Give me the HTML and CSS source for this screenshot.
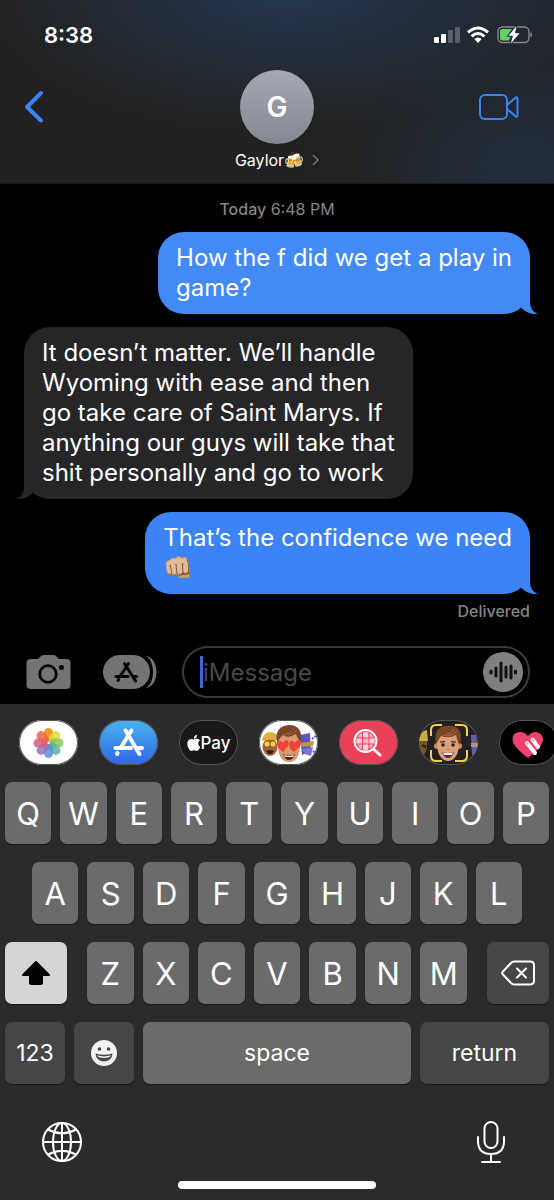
FILE: index.html
```html
<!DOCTYPE html>
<html lang="en">
<head>
    <meta charset="UTF-8">
    <meta name="viewport" content="width=device-width, initial-scale=1">
    <title>Messages</title>
    <link rel="stylesheet" href="styles.css">
</head>
<body>
    <header>
        <div class="status-bar">
            <span class="time">8:38</span>
            <svg class="status-icons" width="98" height="18" viewBox="0 0 98 18" aria-hidden="true">
                <g fill="#fff">
                    <rect x="0" y="11" width="5" height="6" rx="1"/>
                    <rect x="7" y="8" width="5" height="9" rx="1"/>
                    <rect x="14" y="4" width="5" height="13" rx="1" opacity=".25"/>
                    <rect x="21" y="1" width="5" height="16" rx="1" opacity=".25"/>
                </g>
                <g fill="none" stroke="#fff" stroke-width="3">
                    <path d="M34 6.300Q44 -2.300 54 6.300"/>
                    <path d="M37.600 10.400Q44 4.600 50.400 10.400"/>
                </g>
                <path d="M40.300 13Q44 10 47.700 13L44 17Z" fill="#fff"/>
                <rect x="64" y="1" width="31" height="15.500" rx="4.500" fill="none" stroke="#fff" stroke-opacity=".45" stroke-width="1.400"/>
                <path d="M96.500 6Q98 6.500 98 8.800Q98 11 96.500 11.500Z" fill="#fff" opacity=".5"/>
                <path d="M68.500 3H78L73.500 9.500H77L75 14.500H68.500Q66 14.500 66 12V5.500Q66 3 68.500 3Z" fill="#62d266"/>
                <path d="M82.500 0L74.500 9.800H79L76.800 17.500L85.500 7.300H81Z" fill="#fff" stroke="#222c39" stroke-width="2"/>
                <path d="M82.500 0L74.500 9.800H79L76.800 17.500L85.500 7.300H81Z" fill="#fff"/>
            </svg>
        </div>
        <div class="contact-bar">
            <button class="back-btn" aria-label="Back">
                <svg width="20" height="34" viewBox="0 0 20 34"><path d="M17 3L3 17L17 30.500" fill="none" stroke="#3c83f6" stroke-width="4" stroke-linecap="round" stroke-linejoin="round"/></svg>
            </button>
            <div class="avatar">G</div>
            <button class="video-btn" aria-label="Video call">
                <svg width="40" height="28" viewBox="0 0 40 28" fill="none" stroke="#3c83f6" stroke-width="2" stroke-linejoin="round"><rect x="1" y="2" width="27" height="24" rx="5"/><path d="M28 12L36.500 4.700Q38.500 3.500 38.500 6V22Q38.500 24.500 36.500 23.300L28 16"/></svg>
            </button>
        </div>
        <a class="contact-name" href="#">
            <span>Gaylor🍻</span>
            <svg width="7" height="12" viewBox="0 0 7 12"><path d="M1 1L6 6L1 11" fill="none" stroke="#77797e" stroke-width="1.400"/></svg>
        </a>
    </header>

    <main class="messages">
        <p class="timestamp"><b>Today</b> 6:48 PM</p>
        <div class="bubble sent first">
            How the f did we get a play in<br>game?
            <svg class="tail" width="34" height="26" viewBox="0 0 34 26"><path d="M26 0V14Q26 23 34 26Q24 27 17 19.500L8 8Z"/></svg>
        </div>
        <div class="bubble received">
            It doesn’t matter. We’ll handle<br>Wyoming with ease and then<br>go take care of Saint Marys. If<br>anything our guys will take that<br>shit personally and go to work
            <svg class="tail" width="34" height="26" viewBox="0 0 34 26"><path d="M8 0V14Q8 23 0 26Q10 27 17 19.500L26 8Z"/></svg>
        </div>
        <div class="bubble sent">
            That’s the confidence we need<br>👊🏼
            <svg class="tail" width="34" height="26" viewBox="0 0 34 26"><path d="M26 0V14Q26 23 34 26Q24 27 17 19.500L8 8Z"/></svg>
        </div>
        <p class="delivered">Delivered</p>
    </main>

    <form class="compose">
        <button type="button" class="camera-btn" aria-label="Camera">
            <svg width="45" height="36" viewBox="0 0 45 36"><path d="M5 5H11Q13 5 14 3L15 2Q16 1 18 1H27Q29 1 30 2L31 3Q32 5 34 5H40Q44.500 5 44.500 9V31Q44.500 35 40 35H5Q.5 35 .5 31V9Q.5 5 5 5Z" fill="#747476"/><circle cx="22" cy="20" r="8.300" fill="none" stroke="#000" stroke-width="2.800"/><circle cx="35.500" cy="13.500" r="2.500"/></svg>
        </button>
        <button type="button" class="apps-btn" aria-label="Apps">
            <svg width="54" height="36" viewBox="0 0 54 36"><rect x="0" y="1" width="47" height="34" rx="17" fill="#747476"/><path d="M43 1.500Q53.500 5 53.500 18Q53.500 31 43 34.500Q50 29 50 18Q50 7 43 1.500Z" fill="#747476"/><g fill="none" stroke="#000" stroke-width="3" stroke-linecap="round"><path d="M21.500 9.500L32.500 27M25.500 9.500L17 22.500M15.500 25.500L15 26.500M13 22.500H25M30.500 22.500H33.500"/></g></svg>
        </button>
        <label class="message-box">
            <span class="caret"></span>
            <input type="text" placeholder="iMessage" aria-label="iMessage">
            <button type="button" class="audio-btn" aria-label="Record audio">
                <svg width="28" height="24" viewBox="0 0 28 24" stroke="#111" stroke-width="3" stroke-linecap="round"><path d="M2 11V13M7 8V16M12 3V21M17 7V17M22 6V18M26.500 11V13"/></svg>
            </button>
        </label>
    </form>

    <section class="keyboard">
        <div class="app-strip">
            <button class="app photos" aria-label="Photos">
                <svg width="59" height="44" viewBox="0 0 59 44"><g transform="translate(29.500 22)">
                    <rect x="-4.500" y="-15" width="9" height="14" rx="4.500" fill="#f59b2b"/>
                    <rect x="-4.500" y="-15" width="9" height="14" rx="4.500" fill="#dfdc35" transform="rotate(45)" opacity=".85"/>
                    <rect x="-4.500" y="-15" width="9" height="14" rx="4.500" fill="#8fc65a" transform="rotate(90)" opacity=".85"/>
                    <rect x="-4.500" y="-15" width="9" height="14" rx="4.500" fill="#56b597" transform="rotate(135)" opacity=".85"/>
                    <rect x="-4.500" y="-15" width="9" height="14" rx="4.500" fill="#5b93d3" transform="rotate(180)" opacity=".85"/>
                    <rect x="-4.500" y="-15" width="9" height="14" rx="4.500" fill="#9174bb" transform="rotate(225)" opacity=".85"/>
                    <rect x="-4.500" y="-15" width="9" height="14" rx="4.500" fill="#d35c8a" transform="rotate(270)" opacity=".85"/>
                    <rect x="-4.500" y="-15" width="9" height="14" rx="4.500" fill="#ec6248" transform="rotate(315)" opacity=".85"/>
                </g></svg>
            </button>
            <button class="app store" aria-label="App Store">
                <svg width="59" height="44" viewBox="0 0 59 44"><path d="M26.500 9.500L40.500 33M32.500 9.500L21.500 27M18.500 32L18 33M16.500 27H32M39 27H43" fill="none" stroke="#fff" stroke-width="4" stroke-linecap="round"/></svg>
            </button>
            <button class="app pay">
                <svg width="13" height="16" viewBox="2 0 19 24"><path fill="#fff" d="M12.152 6.896c-.948 0-2.415-1.078-3.960-1.040-2.040.027-3.910 1.183-4.961 3.014-2.117 3.675-.546 9.103 1.519 12.090 1.013 1.454 2.208 3.090 3.792 3.039 1.520-.065 2.090-.987 3.935-.987 1.831 0 2.350.987 3.960.948 1.637-.026 2.676-1.480 3.676-2.948 1.156-1.688 1.636-3.325 1.662-3.415-.039-.013-3.182-1.221-3.220-4.857-.026-3.040 2.480-4.494 2.597-4.559-1.429-2.090-3.623-2.324-4.390-2.376-2-.156-3.675 1.090-4.610 1.090zM15.530 3.830c.843-1.012 1.400-2.427 1.245-3.830-1.207.052-2.662.805-3.532 1.818-.780.896-1.454 2.338-1.273 3.714 1.338.104 2.715-.688 3.559-1.701"/></svg>
                Pay
            </button>
            <button class="app memoji" aria-label="Memoji stickers">
                <svg width="59" height="44" viewBox="0 0 59 44">
                    <!-- hard hat face -->
                    <ellipse cx="11" cy="26" rx="7.500" ry="9" fill="#9a6236"/>
                    <path d="M3 20Q4 11 12 11Q19 12 20 19Q11 18 3 20Z" fill="#dfae36"/>
                    <circle cx="8" cy="23" r="2.500" fill="#f5d34a"/><circle cx="14" cy="23" r="2.500" fill="#f5d34a"/>
                    <path d="M7 30Q11 28 15 30L13 33H9Z" fill="#3c1e17"/>
                    <!-- wizard -->
                    <path d="M41 14L51 12L52 30L43 34Z" fill="#5b55b8"/>
                    <path d="M42 22L55 20L54 25L42 26Z" fill="#c7923c"/>
                    <path d="M43 28L54 26L52 35L46 33Z" fill="#7c73d8"/>
                    <path d="M53 18L57 15M54 30L57 33" stroke="#5b55c8" stroke-width="2" stroke-dasharray="2 1"/>
                    <!-- heart eyes -->
                    <path d="M19 20Q18 41 30 41Q42 41 41 20Q39 9 30 10Q21 10 19 20Z" fill="#d99a72"/>
                    <path d="M18 22Q15 5 30 4Q44 4 42 21Q39 19 37 13Q29 18 24 14Q21 16 18 22Z" fill="#7b4528"/>
                    <path d="M24 14Q31 13 35 7M29 14Q36 12 38 9" fill="none" stroke="#a5653f" stroke-width="1"/>
                    <path d="M24 31Q18 27 18 23Q18 19 21.500 20Q23 20 24 22Q25 19 28 19Q31 21 29 25Z" fill="#f24139"/>
                    <path d="M35 31Q30 28 30 23Q31 19 34 20L35.500 22Q38 18 41 20Q44 23 39 27Z" fill="#f24139"/>
                    <path d="M24 33Q30 36 36 33Q34 39 30 39Q26 39 24 33Z" fill="#54231e"/>
                    <path d="M25 34Q30 36 35 34L34 36H26Z" fill="#fff"/>
                </svg>
            </button>
            <button class="app images" aria-label="Images">
                <svg width="59" height="44" viewBox="0 0 59 44"><circle cx="26.500" cy="20" r="9" fill="#fbb6c2"/><path d="M23 11H29V17H23ZM17 17H23V23H17ZM29 17H36V23H29ZM23 23H29V30H23Z" fill="#fff" opacity=".4"/><path d="M23.500 11V29M30 11V29M17 17H36M17 23H36" stroke="#ea4058" stroke-width="1"/><circle cx="26.500" cy="20" r="11" fill="none" stroke="#fff" stroke-width="2"/><path d="M34.500 28L41 34" stroke="#fff" stroke-width="3" stroke-linecap="round"/></svg>
            </button>
            <button class="app animoji" aria-label="Animoji">
                <svg width="59" height="44" viewBox="0 0 59 44">
                    <path d="M0 13Q7 11 8 20Q9 32 3 35L0 32Z" fill="#74542c"/><path d="M0 20Q1 10 8 9L9 20Z" fill="#c9ad3d"/><path d="M3 24L7 26" stroke="#222" stroke-width="2"/>
                    <path d="M52 14H57L59 33L53 34Z" fill="#6561a8"/><path d="M52 22H59V26H52Z" fill="#b6946b"/>
                    <circle cx="18" cy="25" r="3" fill="#c98b62"/><circle cx="40" cy="25" r="3" fill="#c98b62"/>
                    <path d="M18 17Q17 39 29 40Q41 39 40 17Q37 10 29 11Q21 10 18 17Z" fill="#dda078"/>
                    <path d="M17 23Q14 6 27 5Q42 3 42 16Q42 21 40 24Q38 19 37 14Q30 18 22 15Q20 18 17 23Z" fill="#7b4528"/>
                    <path d="M23 15Q31 14 35 8M28 15Q35 14 38 10" fill="none" stroke="#ad6a42" stroke-width="1"/>
                    <circle cx="24" cy="24" r="1.800" fill="#292020"/><circle cx="34" cy="24" r="1.800" fill="#292020"/>
                    <path d="M21 21L26 20.500M32 20.500L37 21" stroke="#6b3b24" stroke-width="1.500"/><path d="M28 28Q29.500 29.500 31 28" fill="none" stroke="#b86f53"/>
                    <path d="M23 31Q29 33 35 31Q33 37 29 37Q25 37 23 31Z" fill="#6a2827"/><path d="M24 31.500Q29 33 34 31.500L33 34H25Z" fill="#fff"/>
                    <path d="M12 15V9Q12 4 17 4H23M36 4H43Q48 4 48 9V15M48 29V35Q48 40 43 40H36M23 40H17Q12 40 12 35V29" fill="none" stroke="#f7d047" stroke-width="2"/>
                </svg>
            </button>
            <button class="app touch" aria-label="Digital Touch">
                <svg width="59" height="44" viewBox="0 0 59 44"><path d="M29 37Q13 25 13.500 18Q14 11 21 11Q26 11 29 15Q32 11 37 11Q44 12 44 19Q43 27 29 37Z" fill="#ee426c"/><path d="M28 22L36 32M33.500 18.500L39 26" stroke="#fff" stroke-width="4" stroke-linecap="round"/><path d="M27.800 21.500L28.800 23M33.300 18.300L34.300 19.800" stroke="#f4aebe" stroke-width="2" stroke-linecap="round"/></svg>
            </button>
        </div>

        <div class="keys">
            <div class="key-row">
                <button>Q</button><button>W</button><button>E</button><button>R</button><button>T</button><button>Y</button><button>U</button><button>I</button><button>O</button><button>P</button>
            </div>
            <div class="key-row inset">
                <button>A</button><button>S</button><button>D</button><button>F</button><button>G</button><button>H</button><button>J</button><button>K</button><button>L</button>
            </div>
            <div class="key-row wide-gap">
                <button class="shift" aria-label="Shift">
                    <svg width="30" height="26" viewBox="0 0 30 26"><path d="M14 1.500Q15 .5 16 1.500L28.500 14Q30 16 27.500 16H22V23Q22 25 20 25H10Q8 25 8 23V16H2.500Q0 16 1.500 14Z"/></svg>
                </button>
                <div class="key-row letters">
                    <button>Z</button><button>X</button><button>C</button><button>V</button><button>B</button><button>N</button><button>M</button>
                </div>
                <button class="delete" aria-label="Delete">
                    <svg width="34" height="26" viewBox="0 0 34 26" fill="none" stroke="#fff" stroke-width="2" stroke-linecap="round" stroke-linejoin="round"><path d="M13 1.500H29Q33 1.500 33 5.500V20.500Q33 24.500 29 24.500H13Q11.500 24.500 10 23L1.500 14Q.8 13 1.500 12L10 3Q11.500 1.500 13 1.500Z"/><path d="M16 8.500L25 17.500M25 8.500L16 17.500"/></svg>
                </button>
            </div>
            <div class="key-row">
                <button class="numbers">123</button>
                <button class="emoji" aria-label="Emoji">
                    <svg width="26" height="26" viewBox="0 0 26 26"><circle cx="13" cy="13" r="13" fill="#f2f2f2"/><circle cx="8.500" cy="9" r="1.800" fill="#464646"/><circle cx="17.500" cy="9" r="1.800" fill="#464646"/><path d="M4.500 13.500Q13 16 21.500 13.500Q21 21 13 21.500Q5 21 4.500 13.500Z" fill="#464646"/><path d="M6 15.300Q13 17.500 20 15.300Q19 18 13 18Q7 18 6 15.300Z" fill="#f2f2f2"/></svg>
                </button>
                <button class="space">space</button>
                <button class="return">return</button>
            </div>
        </div>

        <div class="bottom-bar">
            <button aria-label="Next keyboard">
                <svg width="40" height="40" viewBox="0 0 40 40" fill="none" stroke="#fff" stroke-width="2"><circle cx="20" cy="20" r="19"/><ellipse cx="20" cy="20" rx="9" ry="19"/><path d="M20 1V39M1 20H39M6 7.500Q20 15 34 7.500M6 32.500Q20 25 34 32.500"/></svg>
            </button>
            <button aria-label="Dictate">
                <svg width="28" height="42" viewBox="0 0 28 42" fill="none" stroke="#fff" stroke-width="2" stroke-linecap="round"><rect x="7.500" y="1" width="13" height="26" rx="6.500"/><path d="M1 16V20Q1 33 14 33Q27 33 27 20V16M14 33V41M5 41H23"/></svg>
            </button>
        </div>
        <div class="home-indicator"></div>
    </section>
</body>
</html>
```
FILE: styles.css
```css
* {
    box-sizing: border-box;
}
body {
    margin: 0;
    min-height: 100vh;
    display: flex;
    flex-direction: column;
    background: #000;
    color: #fff;
    font-family: Inter, "Liberation Sans", sans-serif;
}
button {
    border: none;
    padding: 0;
    background: none;
    color: inherit;
    font-family: inherit;
    cursor: pointer;
}
svg {
    display: block;
}
p {
    margin: 0;
}

/* Header */
header {
    height: 184px;
    background:
        radial-gradient(ellipse 300px 140px at 52% -10px, #263852, transparent),
        radial-gradient(ellipse 160px 110px at 94% 90%, #212d3b, transparent),
        linear-gradient(90deg, #212121 55%, #21252c);
    border-bottom: 1px solid #1a1a1a;
}
.status-bar {
    display: flex;
    justify-content: space-between;
    align-items: center;
    height: 69px;
    padding: 0 22px 0 44px;
}
.time {
    font-size: 22px;
    font-weight: 600;
}
.contact-bar {
    display: flex;
    align-items: center;
    height: 75px;
    padding: 0 24px;
}
.back-btn, .video-btn {
    flex: 1;
    display: flex;
}
.video-btn {
    justify-content: flex-end;
    padding-right: 11px;
}
.back-btn {
    padding-right: 11px;
}
.avatar {
    width: 74px;
    height: 74px;
    border-radius: 50%;
    background: linear-gradient(#a5a8b4, #858893);
    display: flex;
    align-items: center;
    justify-content: center;
    font-size: 28px;
    font-weight: 600;
}
.contact-name {
    display: flex;
    justify-content: center;
    align-items: center;
    gap: 8px;
    height: 32px;
    color: #fff;
    font-size: 16px;
    text-decoration: none;
}

/* Messages */
.messages {
    flex: 1;
    display: flex;
    flex-direction: column;
    align-items: flex-start;
    padding: 14px 24px 0;
}
.timestamp {
    align-self: center;
    height: 34px;
    line-height: 22px;
    font-size: 16px;
    color: #858589;
}
.timestamp b {
    font-weight: 500;
}
.bubble {
    position: relative;
    padding: 11px 18px;
    margin-bottom: 13px;
    border-radius: 26px;
    font-size: 24px;
    line-height: 30px;
}
.sent {
    align-self: flex-end;
    background: #3c83f7;
}
.sent.first {
    background: #448af7;
}
.received {
    background: #262629;
}
.tail {
    position: absolute;
    bottom: 0;
    right: -8px;
    fill: #3c83f7;
}
.first .tail {
    fill: #448af7;
}
.received .tail {
    left: -8px;
    fill: #262629;
}
.delivered {
    align-self: flex-end;
    margin-top: -6px;
    line-height: 20px;
    font-size: 16px;
    font-weight: 500;
    color: #858589;
}

/* Compose row */
.compose {
    display: flex;
    align-items: center;
    padding: 0 24px 6px 26px;
}
.camera-btn {
    margin-right: 32px;
}
.apps-btn {
    margin-right: 25px;
}
.message-box {
    flex: 1;
    min-width: 0;
    display: flex;
    align-items: center;
    height: 52px;
    padding: 0 5px 0 16px;
    border: 2px solid #3a3a3c;
    border-radius: 26px;
}
.caret {
    width: 3px;
    height: 32px;
    background: #4263e0;
}
.message-box input {
    flex: 1;
    min-width: 0;
    border: none;
    padding: 0;
    outline: none;
    background: none;
    color: #fff;
    font-family: inherit;
    font-size: 24px;
}
.message-box input::placeholder {
    color: #48484a;
    opacity: 1;
}
.audio-btn {
    flex: none;
    display: flex;
    align-items: center;
    justify-content: center;
    width: 40px;
    height: 40px;
    border-radius: 50%;
    background: #808082;
}

/* Keyboard */
.keyboard {
    background: #2b2b2b;
}
.app-strip {
    display: flex;
    gap: 21px;
    padding: 16px 0 17px 19px;
    overflow: hidden;
}
.app {
    flex: none;
    width: 59px;
    height: 45px;
    border-radius: 23px;
    overflow: hidden;
    box-shadow: inset 0 0 0 1px #555;
}
.photos, .memoji {
    background: #fff;
}
.store {
    background: linear-gradient(#49b3ee, #2f66ea);
}
.pay {
    display: flex;
    align-items: center;
    justify-content: center;
    gap: 1px;
    background: #1a1817;
    font-size: 17px;
    font-weight: 500;
}
.images {
    background: #ea4058;
}
.animoji {
    background: #222;
}
.touch {
    background: #000;
}
.keys {
    display: flex;
    flex-direction: column;
    gap: 18px;
    padding: 0 5px;
}
.key-row {
    display: flex;
    gap: 9px;
}
.key-row button {
    flex: 1;
    display: flex;
    align-items: center;
    justify-content: center;
    min-width: 0;
    height: 62px;
    border-radius: 7px;
    background: #6b6b6b;
    box-shadow: 0 1px 1px #1a1a1a;
    font-size: 31px;
    font-weight: 400;
}
.inset {
    padding: 0 27px;
}
.wide-gap {
    gap: 20px;
}
.letters {
    flex: 1;
}
.key-row .shift, .key-row .delete {
    flex: 0 0 62px;
}
.key-row .shift {
    background: #d5d5d5;
}
.key-row .numbers, .key-row .emoji {
    flex: 0 0 60px;
}
.key-row .return {
    flex: 0 0 129px;
}
.key-row .delete, .key-row .numbers, .key-row .emoji, .key-row .return {
    background: #464646;
}
.key-row .numbers, .key-row .space, .key-row .return {
    font-size: 23px;
    font-weight: 400;
}
.bottom-bar {
    display: flex;
    justify-content: space-between;
    align-items: center;
    height: 97px;
    padding: 18px 49px 0 42px;
}
.home-indicator {
    width: 198px;
    height: 8px;
    margin: 0 auto;
    border-radius: 4px;
    background: #fff;
}
.keyboard {
    padding-bottom: 11px;
}
```
